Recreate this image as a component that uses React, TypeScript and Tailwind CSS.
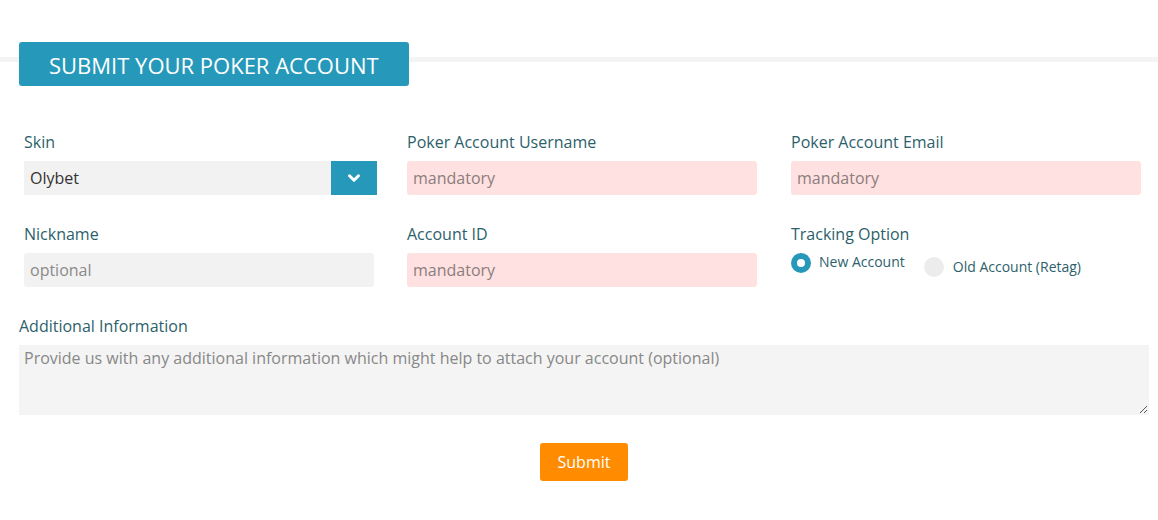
import { ChevronDown } from 'lucide-react';

const font = { fontFamily: '"Open Sans", "Liberation Sans", sans-serif' };

function Label({ children }: { children: React.ReactNode }) {
  return <div className="text-[16px] leading-[22px] text-[#2d5f6b] mb-[8px]">{children}</div>;
}

function Field({ label, placeholder, tone }: { label: string; placeholder: string; tone: 'red' | 'gray' }) {
  return (
    <div className="flex flex-col">
      <Label>{label}</Label>
      <div
        className={
          tone === 'red'
            ? 'h-[34px] rounded-[3px] bg-[#ffe1e1] px-[6px] flex items-center text-[16px] text-[#8c7d7d]'
            : 'h-[34px] w-[350px] rounded-[3px] bg-[#f2f2f2] px-[6px] flex items-center text-[16px] text-[#8a8a8a]'
        }
      >
        {placeholder}
      </div>
    </div>
  );
}

export default function App() {
  return (
    <div className="w-[1158px] h-[520px] bg-white relative" style={font}>
      {/* light rule behind header */}
      <div className="absolute left-0 right-0 top-[57px] h-[5px] bg-[#f4f4f4]" />

      <div className="relative pt-[42px] pl-[19px]">
        <div className="w-[390px] h-[44px] rounded-[3px] bg-[#2699ba] text-white text-[22px] flex items-center pl-[30px] pt-[2px]">
          SUBMIT YOUR POKER ACCOUNT
        </div>
      </div>

      <div className="relative pt-[45px] pl-[24px] grid grid-cols-[353px_350px_354px] gap-x-[30px] gap-y-[28px]">
        <div className="flex flex-col">
          <Label>Skin</Label>
          <div className="h-[34px] bg-[#f2f2f2] flex items-center">
            <span className="flex-1 pl-[6px] text-[16px] text-[#333]">Olybet</span>
            <div className="w-[46px] h-[34px] bg-[#2699ba] flex items-center justify-center">
              <ChevronDown className="w-[18px] h-[18px] text-white" strokeWidth={4} />
            </div>
          </div>
        </div>
        <Field label="Poker Account Username" placeholder="mandatory" tone="red" />
        <div className="pl-[4px]">
          <Field label="Poker Account Email" placeholder="mandatory" tone="red" />
        </div>

        <Field label="Nickname" placeholder="optional" tone="gray" />
        <Field label="Account ID" placeholder="mandatory" tone="red" />
        <div className="pl-[4px] flex flex-col">
          <Label>Tracking Option</Label>
          <div className="flex items-start">
            <div className="flex items-center">
              <span className="w-[20px] h-[20px] rounded-full bg-[#2699ba] flex items-center justify-center">
                <span className="w-[8px] h-[8px] rounded-full bg-white" />
              </span>
              <span className="ml-[8px] text-[14px] text-[#2d5f6b] -mt-[4px]">New Account</span>
            </div>
            <div className="flex items-center ml-[19px] mt-[4px]">
              <span className="w-[20px] h-[20px] rounded-full bg-[#ececec]" />
              <span className="ml-[9px] text-[14px] text-[#2d5f6b] -mt-[2px]">Old Account (Retag)</span>
            </div>
          </div>
        </div>
      </div>

      <div className="relative pl-[19px] pr-[9px] pt-[28px]">
        <Label>Additional Information</Label>
        <div className="relative h-[70px] bg-[#f4f4f4] px-[5px] pt-[1px] text-[16px] text-[#888]">
          Provide us with any additional information which might help to attach your account (optional)
          <svg className="absolute right-[1px] bottom-[1px]" width="10" height="10" viewBox="0 0 10 10">
            <path d="M9 2 L2 9 M9 6 L6 9" stroke="#555" strokeWidth="1" />
          </svg>
        </div>
      </div>

      <div className="relative flex justify-center pt-[28px] pl-[10px]">
        <button className="w-[88px] h-[38px] rounded-[3px] bg-[#ff8c00] text-white text-[16px]">Submit</button>
      </div>
    </div>
  );
}
